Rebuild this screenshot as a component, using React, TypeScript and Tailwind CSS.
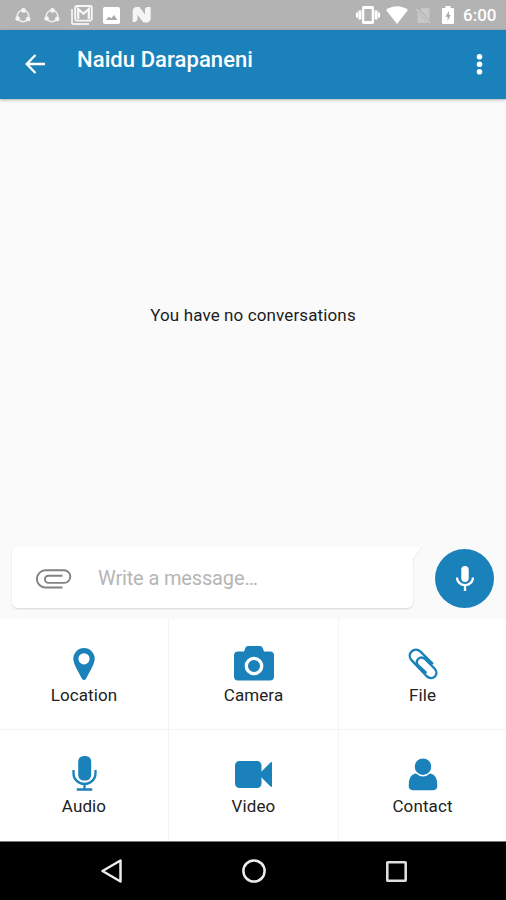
import type { ReactNode } from 'react';

function ShareRing() {
  return (
    <svg width="16" height="17" viewBox="0 0 16 17" fill="none" stroke="#f0f0f0">
      <circle cx="8" cy="9" r="5.7" strokeWidth="1.4" />
      <circle cx="8.5" cy="3.4" r="2.4" fill="#f4f4f4" stroke="none" />
      <circle cx="2.6" cy="11.6" r="2.3" fill="#f4f4f4" stroke="none" />
      <circle cx="13.2" cy="12" r="2.3" fill="#f4f4f4" stroke="none" />
    </svg>
  );
}

function StatusBar() {
  return (
    <div className="flex h-[30px] items-center bg-[#b3b3b3] pl-[15px] pr-[9px]">
      <div className="flex items-center gap-[13px]">
        <ShareRing />
        <ShareRing />
      </div>
      <svg className="ml-[11px]" width="22" height="20" viewBox="0 0 22 20" fill="none">
        <path d="M1 4v13.2Q1 19 2.8 19H18" stroke="#eee" strokeWidth="1.9" />
        <rect x="4.2" y="1" width="16.6" height="14.6" rx="1.5" fill="#b3b3b3" stroke="#f7f7f7" strokeWidth="1.9" />
        <path d="M7.2 14V4l5.3 4.8L17.8 4v10" stroke="#f7f7f7" strokeWidth="2.3" />
      </svg>
      <svg className="ml-[10px]" width="17" height="17" viewBox="0 0 17 17">
        <rect width="17" height="17" rx="1.8" fill="#fff" />
        <path d="m3 13 3-3.5 2 2L11 8l3.4 5z" fill="#aaa" />
      </svg>
      <svg className="ml-[12px]" width="19" height="16" viewBox="0 0 19 16">
        <path d="M.5 3.500 3.500 0v12L.5 15zM15.500 3l3-2.500V12l-3 3z" fill="#dedede" />
        <path d="M1 2 3.500 0h4L13 7.500V1.500L15 0h3.500v13L16 15.500h-4.500L5.500 8v5L3 15H1z" fill="#f5f5f5" />
      </svg>

      <div className="ml-auto flex items-center">
        <svg width="24" height="18" viewBox="0 0 24 18" fill="#fff">
          <path d="M0 6.500h2v5H0zM2.400 4.500h3v9h-3zM18.600 4.500h3v9h-3zM22 6.500h2v5h-2z" />
          <path fillRule="evenodd" d="M7.500 0h9A1.500 1.500 0 0 1 18 1.500v15a1.500 1.500 0 0 1-1.500 1.500h-9A1.500 1.500 0 0 1 6 16.500v-15A1.500 1.500 0 0 1 7.500 0zM8.300 3v12h7.400V3z" />
        </svg>
        <svg className="ml-[6px]" width="22" height="18" viewBox="0 0 22 18" fill="#fff">
          <path d="M11 18 0 4Q5 .3 11 .3T22 4z" />
        </svg>
        <svg className="ml-[8px]" width="15" height="17" viewBox="0 0 15 17">
          <path d="M6 1h7.500v12L4.300 3zM1.500 5 12 16H1.500z" fill="#c8c8c8" />
          <path d="m.5 2 13.500 14" stroke="#cecece" strokeWidth="1.300" />
        </svg>
        <svg className="ml-[11px]" width="12" height="18" viewBox="0 0 12 18">
          <path d="M3.500 0h5v2H11a1 1 0 0 1 1 1v14a1 1 0 0 1-1 1H1a1 1 0 0 1-1-1V3a1 1 0 0 1 1-1h2.500z" fill="#fff" />
          <path d="M7 5 3.300 10.800h2.300V15L8.700 9H7z" fill="#aaa" />
        </svg>
        <span className="ml-[9px] w-[34px] whitespace-nowrap pt-px text-[17px] font-medium leading-none text-white">6:00</span>
      </div>
    </div>
  );
}

function Header() {
  return (
    <header className="z-10 flex h-[69px] items-start bg-[#1b81ba] pl-[25px] pr-[23px] shadow-[0_1px_3px_rgba(0,0,0,0.3)]">
      <button aria-label="Back" className="mt-[24px]">
        <svg width="21" height="20" viewBox="0 0 21 20" fill="none" stroke="#fff" strokeWidth="2.300">
          <path d="M20 10H2M10.500 1 1.700 10l8.800 9" />
        </svg>
      </button>
      <h1 className="ml-[31px] mt-[15px] text-[22px] font-medium leading-[29px] tracking-[0.08px] text-white">Naidu Darapaneni</h1>
      <button aria-label="More" className="ml-auto mt-[23px]">
        <svg width="7" height="22" viewBox="0 0 7 22" fill="#fff">
          <circle cx="3.500" cy="3.700" r="2.800" />
          <circle cx="3.500" cy="11.200" r="2.800" />
          <circle cx="3.500" cy="18.700" r="2.800" />
        </svg>
      </button>
    </header>
  );
}

function Composer() {
  return (
    <div className="flex h-[72px] items-start pl-3 pr-[12px]">
      <div className="relative flex h-[61px] w-[401px] items-center rounded-[6px] bg-white pl-[24px] shadow-[0_1px_2px_rgba(0,0,0,0.14)]">
        <svg className="absolute -right-[9px] top-0" width="14" height="14" viewBox="0 0 14 14">
          <path d="M0 0h14L5 12H0z" fill="#fff" />
          <path d="M14 0 5 12v2" fill="none" stroke="#ececec" />
        </svg>
        <svg className="mt-[2px]" width="36" height="20" viewBox="0 0 36 20" fill="none" stroke="#828282" strokeWidth="1.900">
          <path d="M26.500 18.500H9.500a8.600 8.600 0 0 1 0-17.200H28a6.300 6.300 0 0 1 0 12.600H12.500a3.600 3.600 0 0 1 0-7.200h14" />
        </svg>
        <span className="ml-[26px] pt-px text-[20px] tracking-[-0.15px] text-[#b5b5b5]">Write a message…</span>
      </div>
      <button aria-label="Record" className="ml-auto mt-[2px] flex size-[59px] items-center justify-center rounded-full bg-[#1b81ba]">
        <svg width="18" height="25" viewBox="0 0 18 25" fill="none">
          <rect x="5.300" y="0" width="7.400" height="16" rx="3.700" fill="#fff" />
          <path d="M1 11.500a8 7.700 0 0 0 16 0M9 19v6" stroke="#fff" strokeWidth="2.300" />
        </svg>
      </button>
    </div>
  );
}

function AttachTile({ label, children }: { label: string; children: ReactNode }) {
  return (
    <button className="flex flex-col items-center bg-white pt-[25px]">
      <span className="flex h-[38px] items-center justify-center">{children}</span>
      <span className="text-[17px] leading-[26px] tracking-[0.1px] text-[#222]">{label}</span>
    </button>
  );
}

function AttachGrid() {
  return (
    <div className="grid h-[222px] grid-cols-[168px_169px_1fr] grid-rows-[110px_111px] gap-px bg-[#f4f4f4]">
      <AttachTile label="Location">
        <svg className="mt-[2px]" width="22" height="32" viewBox="0 0 22 32" fill="#1b81ba">
          <path fillRule="evenodd" d="M11 0a10.700 10.700 0 0 1 10.700 10.700c0 4.500-3.500 10-8.500 19.700q-2.200 3-4.400 0C3.800 20.700.3 15.200.3 10.700A10.700 10.700 0 0 1 11 0zm0 5.200a5.600 5.600 0 1 0 0 11.200 5.600 5.600 0 0 0 0-11.200z" />
        </svg>
      </AttachTile>
      <AttachTile label="Camera">
        <svg width="40" height="35" viewBox="0 0 40 35">
          <path d="M14 0h12q2 0 2.700 2l1.300 3.500h6a4 4 0 0 1 4 4v21a4 4 0 0 1-4 4H4a4 4 0 0 1-4-4v-21a4 4 0 0 1 4-4h6L11.300 2Q12 0 14 0z" fill="#1b81ba" />
          <circle cx="20" cy="20" r="7.700" fill="none" stroke="#fff" strokeWidth="3.300" />
        </svg>
      </AttachTile>
      <AttachTile label="File">
        <svg className="mt-px" width="30" height="32" viewBox="0 0 30 32" fill="none" stroke="#1b81ba" strokeWidth="2.400">
          <path d="M25 16 12.500 3.600C6.500-2-2 6 3.500 12.200l15 15.800c6 5.500 13.500-1.500 8-7.500l-9.500-9.500C12.500 7 6 12.500 10 17l8.500 8" />
        </svg>
      </AttachTile>
      <AttachTile label="Audio">
        <svg className="-mt-[2px]" width="25" height="35" viewBox="0 0 25 35" fill="none" stroke="#1b81ba" strokeWidth="2.300">
          <rect x="6.200" y="0" width="13" height="24.500" rx="5.500" fill="#1b81ba" stroke="none" />
          <path d="M1.500 14v3.500a11 10.500 0 0 0 22 0V14M12.500 28v5M4.800 33.500h15.400" />
        </svg>
      </AttachTile>
      <AttachTile label="Video">
        <svg className="mt-px" width="38" height="27" viewBox="0 0 38 27" fill="#1b81ba">
          <rect x="0" y="0" width="26.500" height="27" rx="4.500" />
          <path d="M25 12 35.500 1.500Q37 .5 37 2v23q0 1.500-1.500.5L25 15z" />
        </svg>
      </AttachTile>
      <AttachTile label="Contact">
        <svg width="30" height="33" viewBox="0 0 30 33" fill="#1b81ba">
          <path d="M7.500 15.500h15q6.800 1 6.800 12 0 4.800-4.500 4.800H5.200Q.7 32.300.7 27.500.7 16.500 7.500 15.500z" />
          <circle cx="15" cy="8.700" r="9" stroke="#fff" strokeWidth="1.500" />
        </svg>
      </AttachTile>
    </div>
  );
}

function NavBar() {
  return (
    <nav className="flex h-[59px] items-center justify-between border-t border-[#777] bg-black pl-[101px] pr-[99px]">
      <svg width="21" height="24" viewBox="0 0 21 24" fill="none" stroke="#ececec" strokeWidth="2.500" strokeLinejoin="round">
        <path d="M19.500 1.500v21L1.500 12z" />
      </svg>
      <svg width="24" height="24" viewBox="0 0 24 24" fill="none" stroke="#ececec" strokeWidth="2.500">
        <circle cx="12" cy="12" r="10.600" />
      </svg>
      <svg width="21" height="21" viewBox="0 0 21 21" fill="none" stroke="#dedede" strokeWidth="2.600">
        <rect x="1.300" y="1.300" width="18.400" height="18.400" rx="0.500" />
      </svg>
    </nav>
  );
}

export default function App() {
  return (
    <div className="flex h-[900px] w-[506px] flex-col overflow-hidden bg-[#fafafa] font-[Roboto,sans-serif]">
      <StatusBar />
      <Header />
      <main className="flex flex-1 items-center justify-center pb-[16px]">
        <p className="text-[17px] leading-6 tracking-[0.12px] text-[#1c1c1c]">You have no conversations</p>
      </main>
      <Composer />
      <AttachGrid />
      <NavBar />
    </div>
  );
}
